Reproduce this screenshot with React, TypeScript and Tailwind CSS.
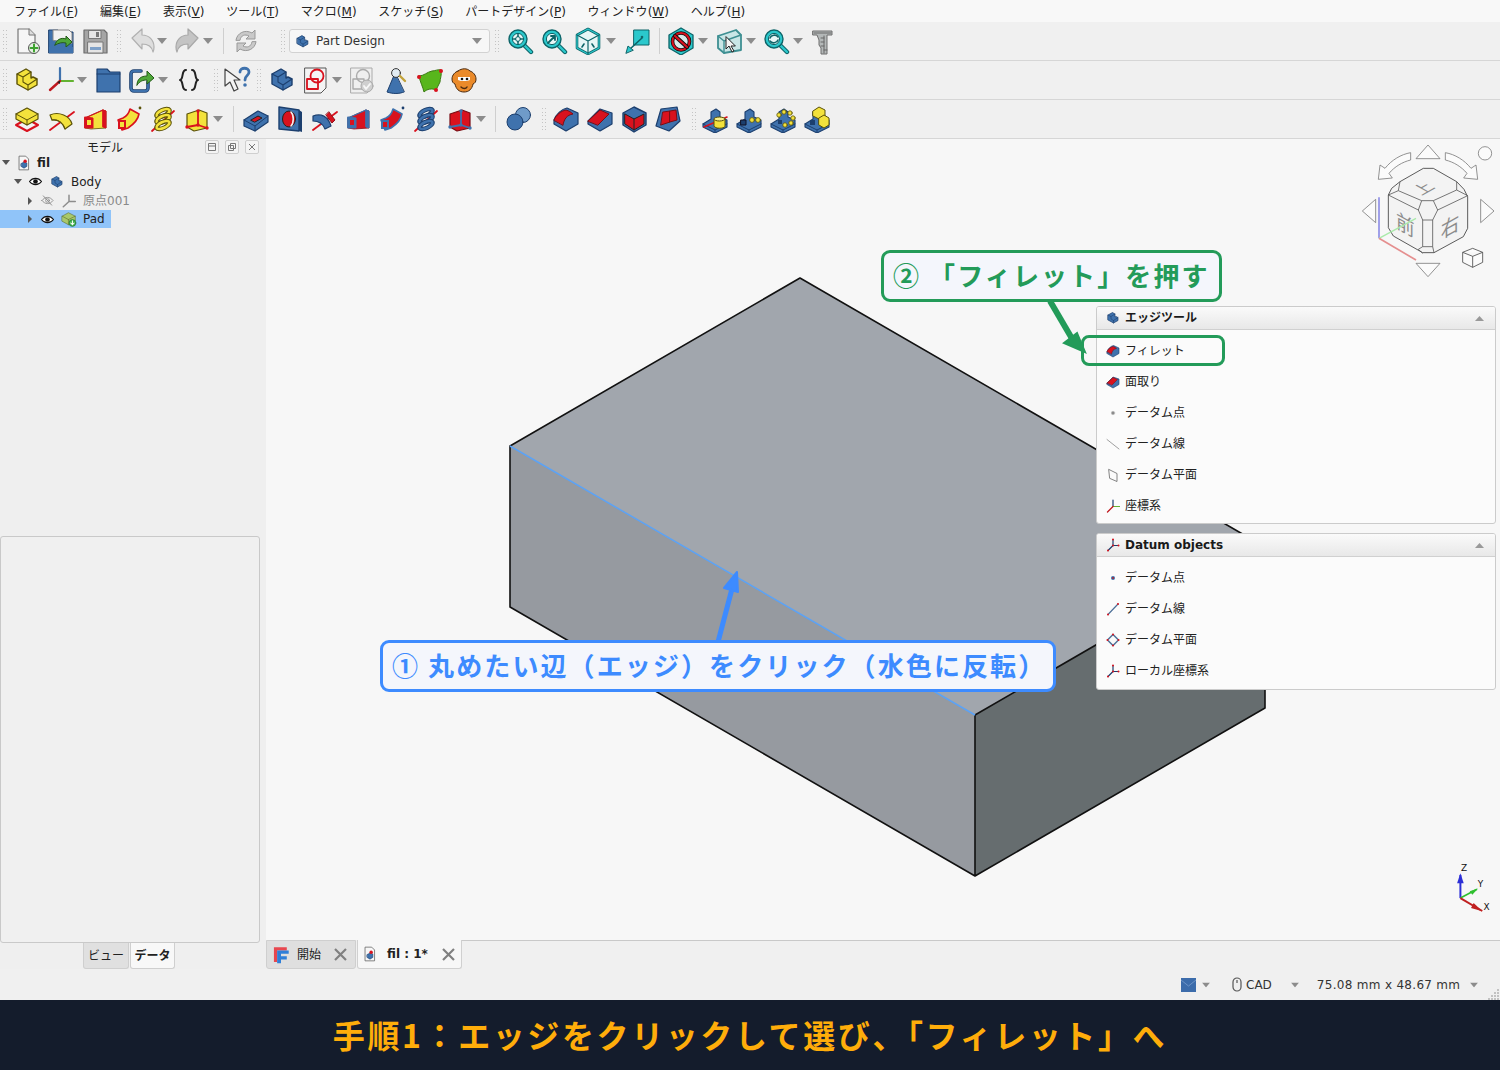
import type { ReactNode } from 'react'

const UI = 'font-["DejaVu_Sans","Noto_Sans_CJK_JP",sans-serif]'
const ANNOT = 'font-["Noto_Sans_CJK_JP",sans-serif]'

const BLUE = '#3f72ad'
const NAVY = '#1c3f6e'
const YEL = '#f3e23c'
const OLIVE = '#5b5208'
const RED = '#d9121e'
const TEAL = '#2bc8cc'
const DTEAL = '#0d6468'

const Svg = ({ children, size = 28 }: { children: ReactNode; size?: number }) => (
  <svg width={size} height={size} viewBox="0 0 28 28" fill="none" strokeLinejoin="round" strokeLinecap="round">
    {children}
  </svg>
)

const LBlock = ({ f = BLUE, s = NAVY }: { f?: string; s?: string }) => (
  <>
    <path d="M4 8 13 3l5 3v6l2-1 4 2v6l-9 5-11-6Z" fill={f} stroke={s} strokeWidth="1.4" />
    <path d="M4 8l6 3v5l5 3 9-6M15 19v5M10 11l8-5" stroke={s} strokeWidth="1.1" />
  </>
)

// yellow or blue solid with red profile, used for additive / subtractive tools
const Cube = ({ f, s, e }: { f: string; s: string; e: string }) => (
  <>
    <path d="M4 9 16 5l8 3v15l-13 3-7-4Z" fill={f} stroke={s} strokeWidth="1.2" />
    <path d="M15 6v14M4 22l11-2 9 3" stroke={e} strokeWidth="1.8" />
    <circle cx="15" cy="6" r="1.7" fill={e} />
    <circle cx="4" cy="22" r="1.7" fill={e} />
    <circle cx="24" cy="23" r="1.7" fill={e} />
    <circle cx="15" cy="20" r="1.7" fill={e} />
  </>
)

const Loft = ({ f, s, e }: { f: string; s: string; e: string }) => (
  <>
    <path d="M4 13 22 5l3 1v17l-15 1-6-1Z" fill={f} stroke={s} strokeWidth="0.8" />
    <path d="M22 5l3 1v17l-3-1Z" fill={e} stroke={e} />
    <path d="M4 12l8 1v10H4Z" fill={e} stroke={e} />
    <rect x="6" y="15" width="4" height="5" fill={f} />
    <path d="M4 13 22 5" stroke={e} strokeWidth="1.2" />
  </>
)

const Pipe = ({ f, s, e }: { f: string; s: string; e: string }) => (
  <>
    <path d="M3 15l5-2c4-2 6-5 7-9l9 5c-1 6-5 10-11 14l-6 2Z" fill={f} stroke={e} strokeWidth="1.6" />
    <rect x="3" y="15" width="8" height="9" fill={e} />
    <rect x="5" y="17" width="4" height="5" fill={f} />
    <circle cx="25" cy="3" r="1.4" fill={s} />
  </>
)

const Helix = ({ f, s }: { f: string; s: string }) => (
  <>
    <path d="M3 26 25 6" stroke={RED} strokeWidth="1.8" />
    {[8, 14, 20].map(y => (
      <g key={y} transform={`rotate(-25 14 ${y})`}>
        <ellipse cx="14" cy={y} rx="7" ry="3" stroke={s} strokeWidth="4.6" />
        <ellipse cx="14" cy={y} rx="7" ry="3" stroke={f} strokeWidth="2.6" />
      </g>
    ))}
  </>
)

const Revolve = ({ f, s }: { f: string; s: string }) => (
  <>
    <path d="M3 25 27 7" stroke={RED} strokeWidth="1.8" />
    <path d="M3 10c9-4 20 1 22 9l-7 5c-2-6-7-10-13-9Z" fill={f} stroke={s} strokeWidth="1.2" />
    <path d="M5 15c7-1 11 3 13 9" stroke={s} />
  </>
)

const Groove = ({ f, s }: { f: string; s: string }) => (
  <>
    <path d="M3 25 27 7" stroke={RED} strokeWidth="1.8" />
    <path d="M3 11c8-3 15 0 18 10l-6 3c-2-5-6-8-12-8Z" fill={f} stroke={s} strokeWidth="1.2" />
    <path d="M19 7l6 8-3 3-6-8Z" fill={RED} stroke="#90101a" />
  </>
)

const Magnifier = ({ children }: { children?: ReactNode }) => (
  <>
    <path d="M18 18l7 7" stroke={DTEAL} strokeWidth="4.4" />
    <path d="M18 18l7 7" stroke={TEAL} strokeWidth="2.4" />
    <circle cx="12" cy="12" r="9" fill={TEAL} stroke={DTEAL} strokeWidth="1.4" />
    <circle cx="12" cy="12" r="5.6" fill="#e9f7f7" stroke={DTEAL} strokeWidth="1" />
    {children}
  </>
)

const Pattern = ({ children }: { children: ReactNode }) => (
  <>
    <path d="M2 19l8-5V7l5-3 4 3v5l7 3v7l-12 6-12-6Z" fill={BLUE} stroke={NAVY} strokeWidth="1.1" />
    <path d="M2 19l12 6 12-6M14 25v3" stroke={NAVY} />
    {children}
  </>
)

const Dots = ({ pts, f = YEL, r = 2.4 }: { pts: number[][]; f?: string; r?: number }) => (
  <>
    {pts.map(([x, y], i) => (
      <circle key={i} cx={x} cy={y} r={r} fill={f} stroke={OLIVE} strokeWidth="0.8" />
    ))}
  </>
)

const ICONS: Record<string, ReactNode> = {
  new: (
    <>
      <path d="M5 2h11l6 6v18H5Z" fill="#f6f6f6" stroke="#777" strokeWidth="1.2" />
      <path d="M16 2v6h6" fill="#ddd" stroke="#777" />
      <circle cx="21" cy="21" r="5.5" fill="#e4efe0" stroke="#555" />
      <path d="M21 17.5v7M17.5 21h7" stroke="#3da32f" strokeWidth="2" />
    </>
  ),
  open: (
    <>
      <path d="M2 3h9l2 2h13v21H2Z" fill={BLUE} stroke={NAVY} />
      <path d="M6 13V3h16l3 3v10Z" fill="#f2f2f2" stroke="#888" />
      <path d="M8 18c1-5 6-8 11-6V9l6 6-6 5v-4c-4-1-7 0-11 2Z" fill="#4fa83a" stroke="#245a18" />
      <path d="M2 20h24v6H2Z" fill={BLUE} />
    </>
  ),
  save: (
    <>
      <path d="M3 3h20l3 3v20H3Z" fill="#a5a5a5" stroke="#6d6d6d" strokeWidth="1.2" />
      <rect x="8" y="3.5" width="12" height="8" fill="#e5e5e5" stroke="#777" />
      <rect x="15" y="5" width="3" height="5" fill="#777" />
      <rect x="7" y="15" width="15" height="11" fill="#e5e5e5" stroke="#777" />
      <rect x="9" y="20" width="11" height="3" fill="#7ea0c8" />
    </>
  ),
  undo: <path d="M3 11 13 2v6c7 0 12 5 12 12 0 2-.5 4-1 5-1-5-5-8-11-8v5Z" fill="#dedede" stroke="#b0b0b0" strokeWidth="1.2" />,
  redo: <path d="M25 11 15 2v6C8 8 3 13 3 20c0 2 .5 4 1 5 1-5 5-8 11-8v5Z" fill="#c4c4c4" stroke="#a8a8a8" strokeWidth="1.2" />,
  refresh: (
    <>
      <path d="M4 13C5 6 13 2 20 6l3-3v9h-9l3-3c-4-2-8-1-9 4Z" fill="#c9c9c9" stroke="#999" />
      <path d="M24 15c-1 7-9 11-16 7l-3 3v-9h9l-3 3c4 2 8 1 9-4Z" fill="#c9c9c9" stroke="#999" />
    </>
  ),
  fit: (
    <Magnifier>
      <circle cx="12" cy="12" r="2.4" stroke={DTEAL} strokeWidth="1" />
      <path d="M12 7.5v2M12 14.5v2M7.5 12h2M14.5 12h2" stroke={DTEAL} strokeWidth="1.6" />
    </Magnifier>
  ),
  fitsel: (
    <Magnifier>
      <path d="M8 16l7-7M15 9h-4M15 9v4" stroke={DTEAL} strokeWidth="1.8" />
    </Magnifier>
  ),
  viewcube: (
    <>
      <path d="M14 2 25 8v13l-11 6-11-6V8Z" fill="#e6f6f6" stroke={DTEAL} strokeWidth="2.6" />
      <path d="M14 2 25 8v13l-11 6-11-6V8Z" stroke={TEAL} strokeWidth="1.2" />
      <path d="M3 8l11 6 11-6M14 14v13" stroke={DTEAL} strokeWidth="1.2" />
      <path d="M8 20l2-3M20 20l-2-3" stroke={DTEAL} strokeWidth="1.6" />
    </>
  ),
  plane: (
    <>
      <path d="M11 3h15v15H11Z" fill={TEAL} stroke={DTEAL} />
      <path d="M19 11 7 22" stroke={DTEAL} strokeWidth="1.6" />
      <path d="M3 26l2-7 5 4Z" fill={TEAL} stroke={DTEAL} />
      <circle cx="19" cy="10" r="1.3" fill="#14666a" />
    </>
  ),
  noview: (
    <>
      <path d="M14 1 26 8v13l-12 7-12-7V8Z" fill={TEAL} stroke={DTEAL} strokeWidth="1.3" />
      <circle cx="14" cy="14.5" r="8.5" fill="#d8eaea" stroke="#111" strokeWidth="3.6" />
      <circle cx="14" cy="14.5" r="8.5" stroke={RED} strokeWidth="2" />
      <path d="M8 9l12 11" stroke="#111" strokeWidth="4" />
      <path d="M8 9l12 11" stroke={RED} strokeWidth="2.2" />
    </>
  ),
  boxsel: (
    <>
      <path d="M3 9 21 3l5 5v15l-17 3-6-5Z" fill="#c9e6e6" stroke="#3e8f92" strokeWidth="1.8" />
      <path d="M3 9l6 5 17-6M9 14v12" stroke="#3e8f92" strokeWidth="1.4" />
      <path d="M11 10v12l3-3 3 6 2-1-3-5h4Z" fill="#f4f4f4" stroke="#222" />
    </>
  ),
  sync: (
    <Magnifier>
      <path d="M8 11c1-3 6-4 8-1M16 13c-1 3-6 4-8 1" stroke={DTEAL} strokeWidth="1.6" />
    </Magnifier>
  ),
  caliper: (
    <>
      <path d="M4 4h19v4H18v19h-6v-6l-2-3v-5L8 8H4Z" fill="#b4b8b8" stroke="#6e6e6e" />
      <path d="M5 6h17M15 9v17M12 11h3M12 15h3M12 19h3M15 23h3" stroke="#666" />
    </>
  ),
  partY: <LBlock f={YEL} s={OLIVE} />,
  part: <LBlock />,
  axes: (
    <>
      <path d="M13 15V2" stroke={BLUE} strokeWidth="2.2" />
      <path d="M13 15h13" stroke="#63b331" strokeWidth="2.2" />
      <path d="M13 15 3 24" stroke="#c0181f" strokeWidth="2.4" />
      <path d="M10 16l3-1v3Z" fill="#222" />
    </>
  ),
  folder: (
    <>
      <path d="M3 3h10l3 3h10v20H3Z" fill={BLUE} stroke={NAVY} strokeWidth="1.2" />
      <path d="M3 8h23" stroke={NAVY} />
    </>
  ),
  link: (
    <>
      <path d="M20 16v6a3 3 0 0 1-3 3H6a3 3 0 0 1-3-3V8a3 3 0 0 1 3-3h7" stroke={NAVY} strokeWidth="3.6" />
      <path d="M20 16v6a3 3 0 0 1-3 3H6a3 3 0 0 1-3-3V8a3 3 0 0 1 3-3h7" stroke={BLUE} strokeWidth="1.8" />
      <path d="M9 19c0-6 4-9 10-9V5l7 7-7 6v-4c-4 0-7 1-10 5Z" fill="#4fa83a" stroke="#245a18" />
    </>
  ),
  braces: (
    <>
      <path d="M11 4c-5 0-2 9-6 10 4 1 1 10 6 10" stroke="#222" strokeWidth="2" />
      <path d="M17 4c5 0 2 9 6 10-4 1-1 10-6 10" stroke="#222" strokeWidth="2" />
    </>
  ),
  whatis: (
    <>
      <path d="M2 3l15 11h-6l4 9-4 2-4-9-5 4Z" fill="#f4f4f4" stroke="#444" strokeWidth="1.2" />
      <path d="M17 6c0-5 9-5 9 0 0 4-4 3-4 8" stroke={BLUE} strokeWidth="2.8" />
      <circle cx="22" cy="19" r="1.8" fill={BLUE} />
    </>
  ),
  sketch: (
    <>
      <path d="M3 2h21v20l-5 5H3Z" fill="#f4f4f4" stroke="#555" />
      <rect x="5" y="13" width="11" height="10" stroke={RED} strokeWidth="1.8" />
      <circle cx="15" cy="10" r="6.5" stroke={RED} strokeWidth="1.8" />
    </>
  ),
  validate: (
    <>
      <path d="M3 2h21v20l-5 5H3Z" fill="#efefef" stroke="#aaa" />
      <rect x="5" y="13" width="11" height="10" stroke="#aaa" strokeWidth="1.4" />
      <circle cx="15" cy="10" r="6.5" stroke="#aaa" strokeWidth="1.4" />
      <circle cx="19" cy="20" r="6" fill="#cfcfcf" stroke="#aaa" />
      <path d="M16 20l2 3 4-5" stroke="#f6f6f6" strokeWidth="2" />
    </>
  ),
  inspect: (
    <>
      <path d="M13 7 5 26c6 2 12 2 17 0Z" fill={BLUE} stroke={NAVY} />
      <circle cx="14" cy="7" r="4.4" fill="#e2ecf3" stroke="#333" />
      <path d="M18 10l5 5" stroke="#c2a23a" strokeWidth="2.4" />
    </>
  ),
  surface: (
    <>
      <path d="M3 10c5 0 8-4 13-5 3 0 6-2 9-1 1 5-1 9-1 12l-4 8c-4-2-9-1-12 2-1-5-4-10-5-16Z" fill="#58b61c" stroke="#3a7a12" />
      <circle cx="25" cy="5" r="2" fill={RED} />
      <circle cx="3" cy="11" r="2" fill={RED} />
      <circle cx="20" cy="24" r="2" fill={RED} />
    </>
  ),
  goat: (
    <>
      <path d="M8 5c4-3 9-3 12 0 3 1 6 4 6 8 0 3-1 4-3 5-1 5-4 8-9 8s-8-3-9-8c-2-1-3-2-3-5 0-4 3-7 6-8Z" fill="#ea8a2a" stroke="#4a2a10" />
      <path d="M8 11h12v3l-3 1H11l-3-1Z" fill="#fff" />
      <circle cx="12" cy="13" r="1.3" fill="#111" />
      <circle cx="17" cy="13" r="1.3" fill="#111" />
      <path d="M11 21c2 2 5 2 6 0" stroke="#4a2a10" strokeWidth="1.4" />
    </>
  ),
  pad: (
    <>
      <path d="M3 20l11-6 11 6-11 6Z" fill="#f4f4f4" stroke={RED} strokeWidth="2" />
      <path d="M3 9l11-6 11 6v5l-11 6-11-6Z" fill={YEL} stroke={OLIVE} strokeWidth="1.2" />
      <path d="M3 9l11 6 11-6M14 15v5" stroke={OLIVE} />
    </>
  ),
  revolve: <Revolve f={YEL} s={OLIVE} />,
  loft: <Loft f={YEL} s={OLIVE} e={RED} />,
  pipe: <Pipe f={YEL} s={OLIVE} e={RED} />,
  helix: <Helix f={YEL} s={OLIVE} />,
  cubeY: <Cube f={YEL} s={OLIVE} e={RED} />,
  pocket: (
    <>
      <path d="M2 15 16 6l10 5v6L13 26 2 21Z" fill={BLUE} stroke={NAVY} strokeWidth="1.2" />
      <path d="M2 15l11 6 13-10M13 21v5" stroke={NAVY} />
      <path d="M9 15l7-4 4 2-7 4Z" fill={RED} stroke="#222" />
    </>
  ),
  hole: (
    <>
      <path d="M3 2l20 3v21L3 24Z" fill={BLUE} stroke={NAVY} strokeWidth="1.4" />
      <path d="M23 5l3 2v20l-3-1Z" fill={NAVY} />
      <ellipse cx="13" cy="14" rx="6.5" ry="8" fill={RED} stroke="#222" />
      <path d="M15 7c3 3 3 11 0 14" stroke="#f0f0f0" strokeWidth="1.6" />
    </>
  ),
  groove: <Groove f={BLUE} s={NAVY} />,
  subloft: <Loft f={RED} s="#8a0f18" e={BLUE} />,
  subpipe: <Pipe f={RED} s={NAVY} e={BLUE} />,
  subhelix: <Helix f={BLUE} s={NAVY} />,
  cubeR: <Cube f={RED} s="#7a0d14" e={BLUE} />,
  boolean: (
    <>
      <circle cx="19" cy="10" r="7.5" fill="#6f9bc9" stroke={NAVY} />
      <circle cx="11" cy="17" r="8" fill={BLUE} stroke={NAVY} />
    </>
  ),
  fillet: (
    <>
      <path d="M2 15C4 9 10 4 15 3l11 5v11l-12 7-12-7Z" fill={BLUE} stroke={NAVY} strokeWidth="1.2" />
      <path d="M2 15C4 10 9 6 14 5c3 1 5 2 7 4-6 1-9 5-10 11Z" fill={RED} stroke="#7a0d14" />
    </>
  ),
  chamfer: (
    <>
      <path d="M2 16 14 4l12 4v11l-12 7-12-7Z" fill={BLUE} stroke={NAVY} strokeWidth="1.2" />
      <path d="M2 16 14 5l9 4-11 11Z" fill={RED} stroke="#7a0d14" />
    </>
  ),
  draft: (
    <>
      <path d="M14 2 26 8v12l-12 7-11-7V8Z" fill={BLUE} stroke={NAVY} strokeWidth="1.4" />
      <path d="M5 9l9 5 10-5v10l-10 6-9-6Z" fill={RED} stroke="#222" />
      <path d="M14 14v11" stroke="#222" />
    </>
  ),
  thickness: (
    <>
      <path d="M7 4l16-2 3 14-11 10-13-5Z" fill={BLUE} stroke={NAVY} strokeWidth="1.2" />
      <path d="M9 7l7-1v11l-9 3Z" fill={RED} stroke="#7a0d14" />
      <path d="M16 6l6-1 1 10-7 2Z" fill={RED} stroke="#7a0d14" />
    </>
  ),
  mirror: (
    <Pattern>
      <path d="M3 22 26 12" stroke={RED} strokeWidth="1.6" />
      <path d="M13 14c0-2 11-2 11 0v7c0 3-11 3-11 0Z" fill={YEL} stroke={OLIVE} />
      <ellipse cx="18.5" cy="14" rx="5.5" ry="2" fill="#faf08a" stroke={OLIVE} />
    </Pattern>
  ),
  linear: (
    <Pattern>
      <Dots pts={[[17, 15], [23, 15]]} />
      <rect x="6" y="15" width="5" height="5" fill={NAVY} stroke="#112" />
    </Pattern>
  ),
  polar: (
    <Pattern>
      <Dots pts={[[10, 10], [15, 7], [21, 8], [24, 13], [22, 18], [16, 20]]} r={2.2} />
      <rect x="9" y="15" width="4" height="4" fill={NAVY} />
    </Pattern>
  ),
  multi: (
    <Pattern>
      <path d="M10 6l6-4 6 3v6l-6 3-6-3Z" fill={YEL} stroke={OLIVE} />
      <path d="M16 13l5-3 5 3v7l-5 3-5-3Z" fill={YEL} stroke={OLIVE} />
      <rect x="7" y="15" width="5" height="5" fill={NAVY} />
    </Pattern>
  ),
  file: (
    <>
      <path d="M6 2h11l5 5v19H6Z" fill="#f7f7f7" stroke="#666" strokeWidth="1.4" />
      <path d="M9 15l6-3 4 2v6l-5 3-5-3Z" fill={BLUE} stroke={NAVY} />
      <circle cx="16" cy="11" r="3" fill={RED} />
    </>
  ),
  padTree: (
    <>
      <path d="M2 9l11-6 12 6v9l-12 6-11-6Z" fill="#a9c96b" stroke="#5a6a2a" />
      <path d="M2 9l11 6 12-6M13 15v9" stroke="#5a6a2a" />
      <circle cx="20" cy="21" r="6" fill="#3fb04d" stroke="#1f7030" />
      <path d="M20 17v7M17 21l3 3 3-3" stroke="#fff" strokeWidth="1.8" />
    </>
  ),
  origin: <path d="M14 15V4M14 15h11M14 15 4 24" stroke="#8d8d8d" strokeWidth="2.6" />,
  freecad: (
    <>
      <path d="M3 2h20v5H8v18H3Z" fill="#e8474f" />
      <path d="M8 7h18v5H14v4h9v5h-9v6H8Z" fill="#2f7fd8" />
    </>
  ),
  dPoint: (
    <>
      <circle cx="14" cy="14" r="4" fill={BLUE} />
      <circle cx="14" cy="14" r="2" fill="#b5212a" />
    </>
  ),
  dLine: (
    <>
      <path d="M4 25 24 4" stroke="#4f7199" strokeWidth="2.4" />
      <circle cx="4" cy="25" r="2" fill={RED} />
      <circle cx="24" cy="4" r="2" fill={RED} />
    </>
  ),
  dPlane: (
    <>
      <path d="M14 3 25 14 14 25 3 14Z" fill="#fafafa" stroke="#4f7199" strokeWidth="3" />
      {[[14, 3], [25, 14], [14, 25], [3, 14]].map(([x, y]) => (
        <circle key={x * 31 + y} cx={x} cy={y} r="2" fill={RED} />
      ))}
    </>
  ),
  dAxes: (
    <>
      <path d="M14 15V3M14 15h11M14 15 4 25" stroke={NAVY} strokeWidth="2.4" />
      <circle cx="14" cy="3" r="2" fill={RED} />
      <circle cx="25" cy="15" r="2" fill={RED} />
      <circle cx="4" cy="25" r="2" fill={RED} />
      <circle cx="14" cy="15" r="2" fill={RED} />
    </>
  ),
  lPoint: <circle cx="14" cy="14" r="3.5" fill="#8b8b8b" stroke="#bbb" />,
  lLine: <path d="M2 5 26 24" stroke="#888" strokeWidth="1.6" />,
  lPlane: <path d="M6 3 22 11v16L8 21Z" fill="#fafafa" stroke="#666" strokeWidth="1.6" />,
  lAxes: (
    <>
      <path d="M14 15V2" stroke={NAVY} strokeWidth="2.4" />
      <path d="M14 15h13" stroke="#63b331" strokeWidth="2.4" />
      <path d="M14 15 3 26" stroke="#c0181f" strokeWidth="2.6" />
    </>
  ),
  eye: (
    <>
      <path d="M1 14c7-9 19-9 26 0-7 9-19 9-26 0Z" fill="#fff" stroke="#111" strokeWidth="2.4" />
      <circle cx="14" cy="14" r="5" fill="#111" />
    </>
  ),
  eyeOff: (
    <>
      <path d="M2 14c7-9 17-9 24 0-7 9-17 9-24 0Z" stroke="#8a8a8a" strokeWidth="1.8" />
      <circle cx="14" cy="14" r="4" stroke="#8a8a8a" strokeWidth="1.8" />
      <path d="M5 4l18 20" stroke="#8a8a8a" strokeWidth="2" />
    </>
  ),
}

const Ic = ({ n, className = '' }: { n: string; className?: string }) => (
  <div className={`flex h-[34px] w-[34px] shrink-0 items-center justify-center ${className}`}>
    <Svg>{ICONS[n]}</Svg>
  </div>
)

const Caret = ({ className = '' }: { className?: string }) => (
  <svg width="10" height="6" viewBox="0 0 10 6" className={`shrink-0 ${className}`}>
    <path d="M0 0h10L5 6Z" fill="#8c8c8c" />
  </svg>
)

const Grip = ({ className = '' }: { className?: string }) => (
  <div className={`grid h-[22px] w-[6px] shrink-0 grid-cols-2 content-between ${className}`}>
    {Array.from({ length: 14 }, (_, i) => (
      <span key={i} className="h-px w-px bg-[#c4c4c4]" />
    ))}
  </div>
)

const Sep = ({ className = '' }: { className?: string }) => (
  <div className={`h-[26px] w-px shrink-0 bg-[#cfcfcf] ${className}`} />
)

const MENU: [string, string][] = [
  ['ファイル', 'F'],
  ['編集', 'E'],
  ['表示', 'V'],
  ['ツール', 'T'],
  ['マクロ', 'M'],
  ['スケッチ', 'S'],
  ['パートデザイン', 'P'],
  ['ウィンドウ', 'W'],
  ['ヘルプ', 'H'],
]

const Row = ({ children }: { children: ReactNode }) => (
  <div className="flex h-[39px] shrink-0 items-center border-b border-[#d6d6d6] bg-[#f0f0f0] pl-[3px]">{children}</div>
)

const Toolbars = () => (
  <>
    <div className="flex h-[22px] shrink-0 items-center gap-[21.8px] bg-[#f8f8f8] pl-[14px] pt-px text-[12px] text-[#222]">
      {MENU.map(([label, key]) => (
        <span key={key}>
          {label}(<span className="underline">{key}</span>)
        </span>
      ))}
    </div>
    <Row>
      <Grip className="mr-px" />
      <Ic n="new" />
      <Ic n="open" />
      <Ic n="save" />
      <Grip className="ml-[5px] mr-[3px]" />
      <Ic n="undo" />
      <Caret className="-ml-[3px]" />
      <Ic n="redo" className="ml-[3px]" />
      <Caret className="-ml-[1px]" />
      <Sep className="ml-[10px]" />
      <Ic n="refresh" className="ml-[5px]" />
      <Grip className="ml-[18px] mr-[2px]" />
      <div className="flex h-[24px] w-[201px] shrink-0 items-center rounded-[3px] border border-[#d2d2d2] bg-[#f7f7f7] pl-[5px] text-[12px] text-[#333]">
        <Svg size={15}>
          <LBlock />
        </Svg>
        <span className="ml-[6px]">Part Design</span>
        <Caret className="ml-auto mr-[7px]" />
      </div>
      <Grip className="ml-[5px] mr-[2px]" />
      <Ic n="fit" />
      <Ic n="fitsel" />
      <Ic n="viewcube" />
      <Caret className="ml-px" />
      <Ic n="plane" className="ml-[4px]" />
      <Sep className="ml-[5px]" />
      <Ic n="noview" className="ml-[4px]" />
      <Caret />
      <Ic n="boxsel" className="ml-[4px]" />
      <Caret />
      <Ic n="sync" className="ml-[3px]" />
      <Caret />
      <Ic n="caliper" className="ml-[3px]" />
    </Row>
    <Row>
      <Grip className="mr-px" />
      <Ic n="partY" />
      <Ic n="axes" />
      <Caret className="-ml-[1px]" />
      <Ic n="folder" className="ml-[4px]" />
      <Ic n="link" />
      <Caret className="-ml-[1px]" />
      <Ic n="braces" className="ml-[4px]" />
      <Grip className="ml-[8px] mr-[1px]" />
      <Ic n="whatis" className="-ml-px" />
      <Grip className="ml-[3px] mr-[1px]" />
      <Ic n="part" className="ml-px" />
      <Ic n="sketch" />
      <Caret className="-ml-[1px]" />
      <Ic n="validate" className="ml-[3px]" />
      <Ic n="inspect" />
      <Ic n="surface" />
      <Ic n="goat" />
    </Row>
    <Row>
      <Grip className="mr-px" />
      <Ic n="pad" />
      <Ic n="revolve" />
      <Ic n="loft" />
      <Ic n="pipe" />
      <Ic n="helix" />
      <Ic n="cubeY" />
      <Caret className="-ml-[1px]" />
      <Sep className="ml-[10px]" />
      <Ic n="pocket" className="ml-[5px]" />
      <Ic n="hole" />
      <Ic n="groove" />
      <Ic n="subloft" />
      <Ic n="subpipe" />
      <Ic n="subhelix" />
      <Ic n="cubeR" />
      <Caret className="-ml-[1px]" />
      <Sep className="ml-[9px]" />
      <Ic n="boolean" className="ml-[5px]" />
      <Grip className="ml-[7px] mr-[1px]" />
      <Ic n="fillet" />
      <Ic n="chamfer" />
      <Ic n="draft" />
      <Ic n="thickness" />
      <Grip className="ml-[7px]" />
      <Ic n="mirror" />
      <Ic n="linear" />
      <Ic n="polar" />
      <Ic n="multi" />
    </Row>
  </>
)

const DockBtn = ({ children }: { children: ReactNode }) => (
  <div className="flex h-[14px] w-[14px] items-center justify-center rounded-[2px] border border-[#cfcfcf] bg-[#f4f4f4]">
    <svg width="10" height="10" viewBox="0 0 10 10" fill="none" stroke="#777">
      {children}
    </svg>
  </div>
)

const TreeArrow = ({ open }: { open?: boolean }) => (
  <svg width="8" height="8" viewBox="0 0 8 8" className="shrink-0">
    <path d={open ? 'M0 1h8L4 6Z' : 'M2 0v8l4-4Z'} fill="#555" />
  </svg>
)

const LeftPanel = () => (
  <div className="flex w-[266px] shrink-0 flex-col bg-[#efefef] text-[12px] text-[#222]">
    <div className="relative flex h-[15px] shrink-0 items-center pl-[87px]">
      <span className="mt-[3px]">モデル</span>
      <div className="absolute left-[205px] top-[1px] flex gap-[6px]">
        <DockBtn>
          <path d="M1.5 1.5h7v7h-7ZM1.5 4h7" />
        </DockBtn>
        <DockBtn>
          <path d="M3.5 1.5h5v5h-5ZM1.5 3.5h5v5h-5Z" />
        </DockBtn>
        <DockBtn>
          <path d="M2 2l6 6M8 2 2 8" />
        </DockBtn>
      </div>
    </div>
    <div className="flex h-[18px] shrink-0 items-center pl-[2px]">
      <TreeArrow open />
      <span className="ml-[6px]">
        <Svg size={16}>{ICONS.file}</Svg>
      </span>
      <span className="ml-[5px] font-bold">fil</span>
    </div>
    <div className="flex h-[19px] shrink-0 items-center pl-[14px]">
      <TreeArrow open />
      <span className="ml-[7px]">
        <Svg size={13}>{ICONS.eye}</Svg>
      </span>
      <span className="ml-[8px]">
        <Svg size={14}>
          <LBlock />
        </Svg>
      </span>
      <span className="ml-[7px]">Body</span>
    </div>
    <div className="flex h-[19px] shrink-0 items-center pl-[26px] text-[#8a8a8a]">
      <TreeArrow />
      <span className="ml-[7px]">
        <Svg size={13}>{ICONS.eyeOff}</Svg>
      </span>
      <span className="ml-[7px]">
        <Svg size={16}>{ICONS.origin}</Svg>
      </span>
      <span className="ml-[6px]">原点001</span>
    </div>
    <div className="flex h-[18px] w-[111px] shrink-0 items-center bg-[#90c4f9] pl-[26px]">
      <TreeArrow />
      <span className="ml-[7px]">
        <Svg size={13}>{ICONS.eye}</Svg>
      </span>
      <span className="ml-[7px]">
        <Svg size={16}>{ICONS.padTree}</Svg>
      </span>
      <span className="ml-[6px]">Pad</span>
    </div>
    <div className="mt-[308px] h-[407px] w-[260px] shrink-0 rounded-[3px] border border-[#c9c9c9] bg-[#f0f0f0]" />
    <div className="flex h-[26px] shrink-0 pl-[83px]">
      <div className="flex w-[46px] items-center justify-center rounded-b-[3px] border border-t-0 border-[#cfcfcf] bg-[#e0e0e0]">ビュー</div>
      <div className="ml-px flex w-[45px] items-center justify-center rounded-b-[3px] border border-t-0 border-[#cfcfcf] bg-[#f8f8f8] font-bold">データ</div>
    </div>
  </div>
)

const NavCube = () => (
  <svg className="absolute -top-[9px] left-[1074px]" width="160" height="160" viewBox="0 0 480 480" fill="none" stroke="#555" strokeWidth="2.4" strokeLinejoin="round">
    <path d="M264 45 228 86h72ZM228 400h72l-36 40ZM107 208v70l-40-35ZM422 208v70l40-35Z" fill="#fbfbfb" stroke="#777" />
    <path d="M212 68v22c-25 6-48 20-65 40l10 14-42 4 5-43 15 10c20-25 48-42 77-47Z" fill="#fbfbfb" stroke="#777" />
    <path d="M316 68v22c25 6 48 20 65 40l-10 14 42 4-5-43-15 10c-20-25-48-42-77-47Z" fill="#fbfbfb" stroke="#777" />
    <circle cx="435" cy="70" r="20" fill="#fbfbfb" stroke="#777" />
    <path d="M250 115h30l70 40 22 23 11 22v95l-13 25-88 48h-34l-88-50-15-25V195l10-20 25-20Z" fill="#f3f3f3" stroke="#333" />
    <path d="M180 155l-5 27-30 13M350 155v25l33 17M175 182l70 30M350 180l-70 32M245 212h35l13 28-15 30h-30l-13-30ZM145 195l90 45M383 197l-90 43M248 270v80h30v-80M248 350l-13 8 13 12M278 350l4 18" />
    <g fill="#8c8c8c" stroke="none" fontFamily="Noto Sans CJK JP, sans-serif" fontSize="62">
      <text transform="matrix(.7 -.4 .7 .4 244 197)">上</text>
      <text transform="matrix(.9 .5 0 1 168 292)">前</text>
      <text transform="matrix(.9 -.5 0 1 302 328)">右</text>
    </g>
    <path d="M117 202v123" stroke="#8f8fe6" strokeWidth="5" />
    <path d="M117 325l111-60" stroke="#a9eaa9" strokeWidth="4" />
    <path d="M117 325l111 65" stroke="#e58f8f" strokeWidth="5" />
    <path d="M398 355l30 12v30l-30 15-30-15v-30ZM368 367l30 12 30-12M398 379v33" stroke="#444" strokeWidth="2.4" fill="#fbfbfb" />
  </svg>
)

const Gizmo = () => (
  <svg className="absolute left-[1181px] top-[721px]" width="50" height="53" viewBox="0 0 150 160" fill="none">
    <path d="M40 115V45" stroke="#2d2fd6" strokeWidth="6" />
    <path d="M30 70 40 40l10 30Z" fill="#2d2fd6" />
    <path d="M40 115 90 88" stroke="#2fbf2f" strokeWidth="5" />
    <path d="M68 94 93 86 76 105Z" fill="#2fbf2f" />
    <path d="M40 115 106 154" stroke="#c02020" strokeWidth="6" />
    <path d="M80 130 106 155 72 145Z" fill="#c02020" />
    <g fill="#111" fontSize="27" fontFamily="DejaVu Sans, sans-serif">
      <text x="42" y="32">Z</text>
      <text x="92" y="82">Y</text>
      <text x="110" y="152">X</text>
    </g>
  </svg>
)

const Model = () => (
  <svg className="absolute inset-0" width="1234" height="801" viewBox="266 139 1234 801" fill="none" strokeLinejoin="round">
    <path d="M510 446 800 278l465 269-290 168Z" fill="#a1a6ad" />
    <path d="M510 446l465 269v161L510 607Z" fill="#969aa0" />
    <path d="M975 715l290-168v161L975 876Z" fill="#666d6f" />
    <path d="M510 446 800 278l465 269v161L975 876 510 607ZM975 715v161M975 715l290-168" stroke="#111" strokeWidth="1.6" />
    <path d="M510 446l465 269" stroke="#5ba2f5" strokeWidth="1.5" />
    <path d="M718 642 733 585" stroke="#3d8bff" strokeWidth="5" />
    <path d="M737 572 724 588 738 592Z" fill="#3d8bff" stroke="#3d8bff" strokeWidth="2" />
  </svg>
)

// arrow of the green callout has to lie over the task panel
const GreenArrow = () => (
  <svg className="absolute inset-0" width="1234" height="801" viewBox="266 139 1234 801" fill="none">
    <path d="M1050 301 1074 342" stroke="#239b59" strokeWidth="6" />
    <path d="M1085 352 1064 343 1077 333Z" fill="#239b59" stroke="#239b59" strokeWidth="2" />
  </svg>
)

const TaskHead = ({ icon, title }: { icon: ReactNode; title: string }) => (
  <div className="flex h-[23px] items-center border-b border-[#d0d0d0] bg-gradient-to-b from-[#fafafa] to-[#e8e8e8] pl-[9px] pr-[11px] text-[12px] font-bold text-[#1a1a1a]">
    <Svg size={14}>{icon}</Svg>
    <span className="ml-[5px]">{title}</span>
    <svg width="9" height="5" viewBox="0 0 9 5" className="ml-auto">
      <path d="M0 5h9L4.5 0Z" fill="#999" />
    </svg>
  </div>
)

const TaskItem = ({ icon, label }: { icon: string; label: string }) => (
  <div className="flex h-[31px] items-center pl-[9px] text-[12px] text-[#222]">
    <Svg size={14}>{ICONS[icon]}</Svg>
    <span className="ml-[5px]">{label}</span>
  </div>
)

const TaskPanels = () => (
  <div className="absolute left-[830px] top-[167px] flex w-[400px] flex-col gap-[9px]">
    <div className="h-[218px] overflow-hidden rounded-[3px] border border-[#cbcbcb] bg-[#fbfbfb]">
      <TaskHead icon={<LBlock />} title="エッジツール" />
      <div className="pt-[5px]">
        <TaskItem icon="fillet" label="フィレット" />
        <TaskItem icon="chamfer" label="面取り" />
        <TaskItem icon="lPoint" label="データム点" />
        <TaskItem icon="lLine" label="データム線" />
        <TaskItem icon="lPlane" label="データム平面" />
        <TaskItem icon="lAxes" label="座標系" />
      </div>
    </div>
    <div className="h-[157px] overflow-hidden rounded-[3px] border border-[#cbcbcb] bg-[#fbfbfb]">
      <TaskHead icon={ICONS.dAxes} title="Datum objects" />
      <div className="pt-[5px]">
        <TaskItem icon="dPoint" label="データム点" />
        <TaskItem icon="dLine" label="データム線" />
        <TaskItem icon="dPlane" label="データム平面" />
        <TaskItem icon="dAxes" label="ローカル座標系" />
      </div>
    </div>
  </div>
)

const Viewport = () => (
  <div className="relative flex-1 bg-[#f7f7f7]">
    <Model />
    <NavCube />
    <Gizmo />
    <TaskPanels />
    <GreenArrow />
    <div className={`absolute left-[615px] top-[111px] flex h-[52px] w-[341px] items-center rounded-[9px] border-[3px] border-[#239b59] bg-[#f4f6fc] pb-[4px] pl-[9px] text-[26px] font-bold tracking-[2.1px] text-[#239b59] ${ANNOT}`}>
      ②&nbsp;「フィレット」を押す
    </div>
    <div className="absolute left-[815px] top-[196px] h-[31px] w-[144px] rounded-[8px] border-[3px] border-[#239b59]" />
    <div className={`absolute left-[114px] top-[501px] flex h-[52px] w-[676px] items-center rounded-[9px] border-[3px] border-[#3d8bff] bg-[#f4f6fc] pb-[4px] pl-[9px] text-[26px] font-bold tracking-[2.1px] text-[#3d8bff] ${ANNOT}`}>
      ①&nbsp;丸めたい辺（エッジ）をクリック（水色に反転）
    </div>
  </div>
)

const TabClose = ({ className = '' }: { className?: string }) => (
  <svg width="13" height="13" viewBox="0 0 13 13" className={className} stroke="#808080" strokeWidth="2.2">
    <path d="M1 1l11 11M12 1 1 12" />
  </svg>
)

const DocTabs = () => (
  <div className="flex h-[29px] shrink-0 items-start bg-[#f0f0f0] text-[12px] text-[#222]">
    <div className="flex h-[29px] w-[90px] items-center rounded-b-[3px] border border-[#cfcfcf] bg-[#dfdfdf] pl-[5px]">
      <Svg size={18}>{ICONS.freecad}</Svg>
      <span className="ml-[7px]">開始</span>
      <TabClose className="ml-[13px]" />
    </div>
    <div className="ml-px flex h-[29px] w-[105px] items-center rounded-b-[3px] border border-t-0 border-[#d0d0d0] bg-[#f7f7f7] pl-[4px]">
      <Svg size={16}>{ICONS.file}</Svg>
      <span className="ml-[9px] font-bold">fil : 1*</span>
      <TabClose className="ml-[14px]" />
    </div>
    <div className="h-px flex-1 bg-[#c9c9c9]" />
  </div>
)

const StatusBar = () => (
  <div className="relative flex h-[31px] shrink-0 items-center bg-[#f0f0f0] pl-[1181px] text-[12px] text-[#333]">
    <svg width="15" height="14" viewBox="0 0 15 14">
      <rect width="15" height="14" fill="#3c6cab" />
      <path d="M0 2l7.5 6L15 2" stroke="#6d94c6" fill="none" />
    </svg>
    <Caret className="ml-[5px] scale-80" />
    <svg width="10" height="15" viewBox="0 0 10 15" fill="none" stroke="#555" strokeWidth="1.2" className="ml-[21px]">
      <rect x="1" y="1" width="8" height="13" rx="4" />
      <path d="M5 3v3" />
    </svg>
    <span className="ml-[4px]">CAD</span>
    <Caret className="ml-[18px] scale-80" />
    <span className="ml-[17px] tracking-[0.3px]">75.08 mm x 48.67 mm</span>
    <Caret className="ml-[9px] scale-80" />
    <svg width="12" height="12" viewBox="0 0 12 12" className="absolute bottom-0 right-0" fill="#c2c2c2">
      <rect x="9" y="1" width="2" height="2" />
      <rect x="6" y="4" width="2" height="2" />
      <rect x="9" y="4" width="2" height="2" />
      <rect x="3" y="7" width="2" height="2" />
      <rect x="6" y="7" width="2" height="2" />
      <rect x="9" y="7" width="2" height="2" />
      <rect x="0" y="10" width="2" height="2" />
      <rect x="3" y="10" width="2" height="2" />
      <rect x="6" y="10" width="2" height="2" />
      <rect x="9" y="10" width="2" height="2" />
    </svg>
  </div>
)

export default function App() {
  return (
    <div className={`flex h-[1070px] w-[1500px] flex-col overflow-hidden bg-[#f0f0f0] ${UI}`}>
      <Toolbars />
      <div className="flex min-h-0 flex-1">
        <LeftPanel />
        <div className="flex flex-1 flex-col">
          <Viewport />
          <DocTabs />
        </div>
      </div>
      <StatusBar />
      <div className={`flex h-[70px] shrink-0 items-center justify-center bg-[#141c2c] pb-[2px] text-[32px] font-bold tracking-[2.6px] text-[#ffad0a] ${ANNOT}`}>
        手順1：エッジをクリックして選び、「フィレット」へ
      </div>
    </div>
  )
}
